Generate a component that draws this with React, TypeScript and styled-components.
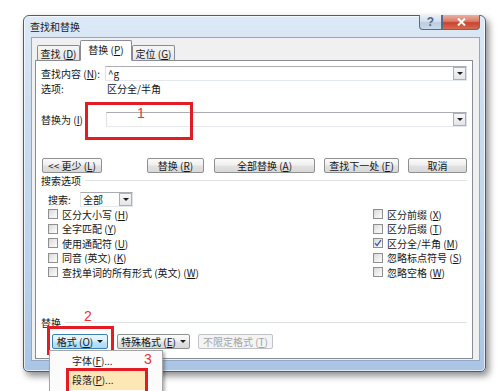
import styled, { createGlobalStyle } from "styled-components";

const GlobalStyle = createGlobalStyle`
  html, body {
    margin: 0;
    padding: 0;
    background: #ffffff;
  }
  body {
    width: 500px;
    height: 391px;
    overflow: hidden;
    font-family: "Noto Sans CJK SC", "Noto Sans", sans-serif;
    font-size: 10px;
    color: #151515;
  }
`;

const Page = styled.div`
  padding: 15px 0 0 23px;
`;

const Window = styled.div`
  box-sizing: border-box;
  width: 463px;
  height: 357px;
  display: flex;
  flex-direction: column;
  padding: 0 5px 10px 7px;
  border: 1px solid #4f5d6e;
  border-radius: 6px 6px 5px 5px;
  background: linear-gradient(180deg, #dce9f6 0%, #cadcf0 30%, #bdd3eb 70%, #a9c5e4 100%);
  box-shadow: 3px 4px 7px rgba(0, 0, 0, 0.45), inset 0 0 0 1px rgba(255, 255, 255, 0.65);
`;

const TitleBar = styled.div`
  height: 21px;
  display: flex;
  justify-content: space-between;
  align-items: flex-start;
`;

const Title = styled.div`
  line-height: 21px;
  margin-left: -1px;
  color: #1a1a1a;
`;

const CaptionButtons = styled.div`
  display: flex;
  margin-top: -1px;
`;

const CaptionButton = styled.div<{ $close?: boolean }>`
  width: ${(p) => (p.$close ? 38 : 23)}px;
  height: 15px;
  box-sizing: border-box;
  border: 1px solid #5d6c80;
  border-top: none;
  border-radius: ${(p) => (p.$close ? "0 0 4px 0" : "0 0 0 4px")};
  background: ${(p) =>
    p.$close
      ? "linear-gradient(180deg, #eab0a3 0%, #dc7a66 45%, #c8442e 55%, #d66b50 100%)"
      : "linear-gradient(180deg, #e9f0f8 0%, #d3e0ee 45%, #bccde1 55%, #cad9ea 100%)"};
  display: flex;
  align-items: center;
  justify-content: center;
  color: #56667a;
  font-family: "Liberation Sans", sans-serif;
  font-weight: bold;
  font-size: 12px;
`;

const Client = styled.div`
  flex: 1;
  display: flex;
  flex-direction: column;
  padding: 2px 6px 1px 3px;
  background: #f0f0f0;
  border: 1px solid #93a8c2;
`;

const TabStrip = styled.div`
  height: 21px;
  display: flex;
  align-items: flex-end;
  padding-left: 2px;
  margin-bottom: -1px;
  position: relative;
  z-index: 1;
`;

const Tab = styled.div<{ $active?: boolean; $w: number }>`
  box-sizing: border-box;
  width: ${(p) => p.$w}px;
  height: ${(p) => (p.$active ? 21 : 15)}px;
  margin-bottom: ${(p) => (p.$active ? 0 : 1)}px;
  border: 1px solid #898c95;
  border-bottom: ${(p) => (p.$active ? "1px solid #ffffff" : "none")};
  border-radius: 2px 2px 0 0;
  background: ${(p) => (p.$active ? "#ffffff" : "linear-gradient(180deg, #f6f6f6 0%, #e6e6e6 100%)")};
  display: flex;
  align-items: center;
  justify-content: center;
  white-space: pre;
  padding-bottom: ${(p) => (p.$active ? 2 : 0)}px;
`;

const Panel = styled.div`
  flex: 1;
  display: flex;
  flex-direction: column;
  padding: 4px 5px 0 5px;
  background: #ffffff;
  border: 1px solid #898c95;
`;

const Row = styled.div<{ $h: number; $mt?: number }>`
  display: flex;
  align-items: center;
  height: ${(p) => p.$h}px;
  margin-top: ${(p) => p.$mt ?? 0}px;
  position: relative;
`;

const Label = styled.div<{ $w: number }>`
  width: ${(p) => p.$w}px;
  flex: none;
  white-space: pre;
`;

const Combo = styled.div<{ $w?: number }>`
  box-sizing: border-box;
  height: 15px;
  ${(p) => (p.$w ? `width: ${p.$w}px;` : "flex: 1;")}
  display: flex;
  align-items: center;
  border: 1px solid #abadb3;
  border-left-color: #dfe3e8;
  border-right-color: #dfe3e8;
  border-bottom-color: #e3e9ef;
  background: #ffffff;
  padding-left: 2px;
`;

const ComboText = styled.div`
  flex: 1;
  white-space: nowrap;
`;

const DropButton = styled.div`
  box-sizing: border-box;
  width: 13px;
  height: 13px;
  border: 1px solid #a9b0b8;
  background: linear-gradient(180deg, #f7f7f7 0%, #e5e5e5 100%);
  display: flex;
  align-items: center;
  justify-content: center;
`;

const Arrow = styled.span<{ $ml?: number }>`
  width: 0;
  height: 0;
  margin-left: ${(p) => p.$ml ?? 0}px;
  border-left: 3px solid transparent;
  border-right: 3px solid transparent;
  border-top: 3px solid #1e1e1e;
`;

const ButtonRow = styled.div<{ $mt: number; $pl?: number; $start?: boolean }>`
  display: flex;
  align-items: center;
  justify-content: ${(p) => (p.$start ? "flex-start" : "space-between")};
  margin-top: ${(p) => p.$mt}px;
  padding-left: ${(p) => p.$pl ?? 0}px;
  height: 16px;
`;

const ButtonGroup = styled.div<{ $gap: number }>`
  display: flex;
  align-items: center;
  gap: ${(p) => p.$gap}px;
`;

const Button = styled.div<{ $w: number; $hot?: boolean; $off?: boolean }>`
  box-sizing: border-box;
  width: ${(p) => p.$w}px;
  height: 15px;
  border: 1px solid ${(p) => (p.$hot ? "#3c7fb1" : p.$off ? "#bfc3c7" : "#8e8f8f")};
  border-radius: 2px;
  background: ${(p) =>
    p.$hot
      ? "linear-gradient(180deg, #eaf6fd 0%, #d9f0fc 48%, #bee6fd 52%, #a7d9f5 100%)"
      : p.$off
      ? "#f4f4f4"
      : "linear-gradient(180deg, #fbfbfb 0%, #efefef 48%, #e2e2e2 52%, #d8d8d8 100%)"};
  color: ${(p) => (p.$off ? "#a3a3a3" : "#151515")};
  display: flex;
  align-items: center;
  justify-content: center;
  white-space: pre;
  position: relative;
`;

const GroupHeader = styled.div<{ $mt?: number }>`
  display: flex;
  align-items: center;
  gap: 4px;
  height: 14px;
  margin-top: ${(p) => p.$mt ?? 0}px;
  &::after {
    content: "";
    flex: 1;
    height: 1px;
    background: #dde2e8;
  }
`;

const OptionGrid = styled.div`
  display: grid;
  grid-template-columns: 325px 1fr;
  grid-auto-rows: 14.5px;
  padding-left: 7px;
`;

const OptionItem = styled.div`
  display: flex;
  align-items: center;
  gap: 4px;
  white-space: pre;
`;

const Box = styled.div`
  box-sizing: border-box;
  width: 10px;
  height: 10px;
  border: 1px solid #8f8f8f;
  background: linear-gradient(135deg, #d8d8d8 0%, #f0f0f0 60%, #fbfbfb 100%);
  display: flex;
  align-items: center;
  justify-content: center;
`;

const Red = styled.div`
  position: absolute;
  box-sizing: border-box;
  border: 3px solid #e21c24;
  pointer-events: none;
`;

const RedNum = styled.div`
  position: absolute;
  font-family: "Liberation Sans", sans-serif;
  font-size: 14px;
  line-height: 14px;
  color: #e2343a;
`;

const Menu = styled.div`
  position: absolute;
  left: -4px;
  top: calc(100% + 2px);
  width: 114px;
  box-sizing: border-box;
  padding: 1px 2px;
  background: #fbfbfb;
  border: 1px solid #a5a5a5;
  box-shadow: 2px 2px 3px rgba(0, 0, 0, 0.3);
  display: flex;
  flex-direction: column;
  z-index: 3;
`;

const MenuItem = styled.div<{ $h: number; $active?: boolean }>`
  height: ${(p) => p.$h}px;
  display: flex;
  align-items: center;
  padding-left: 20px;
  position: relative;
  color: #1b1b1b;
  &::before {
    content: "";
    display: ${(p) => (p.$active ? "block" : "none")};
    position: absolute;
    left: 14px;
    top: 0;
    width: 82px;
    height: 100%;
    background: #fde8b5;
  }
`;

const MenuText = styled.span`
  position: relative;
`;

const K = styled.u`
  text-underline-offset: 1px;
`;

const Check = () => (
  <svg width="8" height="8" viewBox="0 0 8 8">
    <path d="M1 4.2 L3.1 6.4 L7 1.2" fill="none" stroke="#3a5ea8" strokeWidth="1.4" />
  </svg>
);

const Key = ({ k }: { k: string }) => (
  <>
    {" ("}
    <K>{k}</K>)
  </>
);

const Option = ({ label, k, suffix, checked }: { label: string; k: string; suffix?: string; checked?: boolean }) => (
  <OptionItem>
    <Box>{checked && <Check />}</Box>
    <span>
      {label}
      {suffix && ` ${suffix}`}
      <Key k={k} />
    </span>
  </OptionItem>
);

export default function App() {
  return (
    <>
      <GlobalStyle />
      <Page>
        <Window>
          <TitleBar>
            <Title>查找和替换</Title>
            <CaptionButtons>
              <CaptionButton>?</CaptionButton>
              <CaptionButton $close>
                <svg width="9" height="8" viewBox="0 0 9 8">
                  <path d="M1 0.5 L8 7.5 M8 0.5 L1 7.5" stroke="#ffffff" strokeWidth="2" />
                </svg>
              </CaptionButton>
            </CaptionButtons>
          </TitleBar>
          <Client>
            <TabStrip>
              <Tab $w={43}>
                <span>
                  查找<Key k="D" />
                </span>
              </Tab>
              <Tab $w={52} $active>
                <span>
                  替换<Key k="P" />
                </span>
              </Tab>
              <Tab $w={43}>
                <span>
                  定位<Key k="G" />
                </span>
              </Tab>
            </TabStrip>
            <Panel>
              <Row $h={16}>
                <Label $w={64}>
                  查找内容<Key k="N" />:
                </Label>
                <Combo>
                  <ComboText>^g</ComboText>
                  <DropButton>
                    <Arrow />
                  </DropButton>
                </Combo>
              </Row>
              <Row $h={14}>
                <Label $w={66}>选项:</Label>
                <span>区分全/半角</span>
              </Row>
              <Row $h={16} $mt={16}>
                <Label $w={65}>
                  替换为<Key k="I" />
                </Label>
                <Combo>
                  <ComboText />
                  <DropButton>
                    <Arrow />
                  </DropButton>
                </Combo>
                <Red style={{ left: 44, top: -9, width: 108, height: 38 }}>
                  <RedNum style={{ left: 49, top: 1 }}>1</RedNum>
                </Red>
              </Row>
              <ButtonRow $mt={30} $pl={1}>
                <Button $w={60}>
                  <span>
                    &lt;&lt; 更少<Key k="L" />
                  </span>
                </Button>
                <ButtonGroup $gap={9}>
                  <Button $w={57} style={{ marginRight: 1 }}>
                    <span>
                      替换<Key k="R" />
                    </span>
                  </Button>
                  <Button $w={101}>
                    <span>
                      全部替换<Key k="A" />
                    </span>
                  </Button>
                  <Button $w={75}>
                    <span>
                      查找下一处<Key k="F" />
                    </span>
                  </Button>
                  <Button $w={59}>取消</Button>
                </ButtonGroup>
              </ButtonRow>
              <GroupHeader>搜索选项</GroupHeader>
              <Row $h={15} $mt={5} style={{ paddingLeft: 7 }}>
                <Label $w={32}>搜索:</Label>
                <Combo $w={53}>
                  <ComboText>全部</ComboText>
                  <DropButton>
                    <Arrow />
                  </DropButton>
                </Combo>
              </Row>
              <OptionGrid>
                <Option label="区分大小写" k="H" />
                <Option label="区分前缀" k="X" />
                <Option label="全字匹配" k="Y" />
                <Option label="区分后缀" k="T" />
                <Option label="使用通配符" k="U" />
                <Option label="区分全/半角" k="M" checked />
                <Option label="同音" suffix="(英文)" k="K" />
                <Option label="忽略标点符号" k="S" />
                <Option label="查找单词的所有形式" suffix="(英文)" k="W" />
                <Option label="忽略空格" k="W" />
              </OptionGrid>
              <GroupHeader $mt={35.5}>替换</GroupHeader>
              <ButtonRow $mt={4} $pl={11} $start>
                <ButtonGroup $gap={9}>
                  <Button $w={56} $hot>
                    <span>
                      格式<Key k="O" />
                    </span>
                    <Arrow $ml={4} />
                    <RedNum style={{ left: 31, top: -26 }}>2</RedNum>
                    <Red style={{ left: -6, top: -9, width: 67, height: 29 }} />
                    <Menu>
                      <MenuItem $h={17}>
                        <MenuText>
                          字体(<K>F</K>)...
                        </MenuText>
                        <RedNum style={{ left: 92, top: 0 }}>3</RedNum>
                      </MenuItem>
                      <MenuItem $h={21} $active>
                        <MenuText>
                          段落(<K>P</K>)...
                        </MenuText>
                        <Red style={{ left: 14, top: -1, width: 82, height: 26 }} />
                      </MenuItem>
                    </Menu>
                  </Button>
                  <Button $w={73}>
                    <span>
                      特殊格式<Key k="E" />
                    </span>
                    <Arrow $ml={4} />
                  </Button>
                  <Button $w={75} $off style={{ marginLeft: -1 }}>
                    <span>
                      不限定格式<Key k="T" />
                    </span>
                  </Button>
                </ButtonGroup>
              </ButtonRow>
            </Panel>
          </Client>
        </Window>
      </Page>
    </>
  );
}
